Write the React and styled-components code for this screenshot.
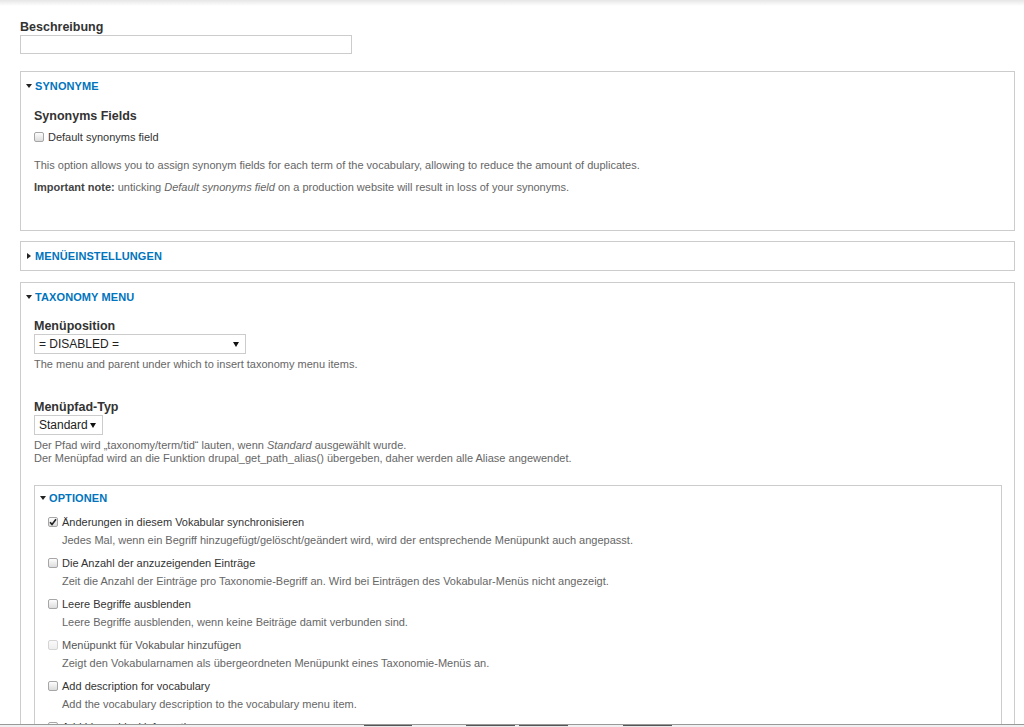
import React from 'react'
import styled, { createGlobalStyle } from 'styled-components'

const GlobalStyle = createGlobalStyle`
  html, body {
    margin: 0;
    padding: 0;
    background: #fff;
  }
  body {
    font-family: "Liberation Sans", Arial, sans-serif;
    font-size: 11px;
    color: #333;
  }
`

const TopShade = styled.div`
  height: 6px;
  background: linear-gradient(#e6e6e6, #fff);
`

const Page = styled.div`
  padding: 13px 9px 40px 20px;
`

const FieldLabel = styled.div`
  font-weight: bold;
  font-size: 12.5px;
  line-height: 16px;
  color: #333;
  margin-top: ${(p) => p.$top || 0}px;
`

const TextInput = styled.div`
  width: 330px;
  height: 17px;
  border: 1px solid #ccc;
  background: #fff;
`

const Fieldset = styled.div`
  border: 1px solid #ccc;
  background: #fff;
  margin-top: ${(p) => p.$top || 0}px;
  padding: 0 ${(p) => p.$right || 12}px ${(p) => p.$bottom || 0}px ${(p) => p.$left || 13}px;
`

const Legend = styled.div`
  display: flex;
  align-items: center;
  height: ${(p) => p.$h || 28}px;
  margin-left: -8px;
  color: #0074bd;
  font-weight: bold;
  font-size: 11px;
  text-transform: uppercase;
  letter-spacing: 0.1px;
`

const Arrow = styled.span`
  width: 0;
  height: 0;
  margin-right: 3px;
  ${(p) =>
    p.$open
      ? `border-left: 3px solid transparent; border-right: 3px solid transparent; border-top: 4px solid #222;`
      : `border-top: 3px solid transparent; border-bottom: 3px solid transparent; border-left: 4px solid #222; margin-left: 1px; margin-right: 4px;`}
`

const CheckRow = styled.div`
  display: flex;
  align-items: center;
  height: 16px;
  margin-top: ${(p) => p.$top || 0}px;
  color: ${(p) => (p.$disabled ? '#555' : '#333')};
`

const Box = styled.span`
  box-sizing: border-box;
  width: 10px;
  height: 10px;
  margin-right: 4px;
  border: 1px solid ${(p) => (p.$disabled ? '#d4d4d4' : '#a6a6a6')};
  border-radius: 2px;
  background: ${(p) =>
    p.$disabled ? 'linear-gradient(#fafafa, #eee)' : 'linear-gradient(#fdfdfd, #dcdcdc)'};
  display: flex;
  align-items: center;
  justify-content: center;
`

const Text = styled.p`
  margin: ${(p) => p.$top || 0}px 0 0 ${(p) => p.$indent || 0}px;
  line-height: ${(p) => p.$lh || 14}px;
  color: #666;
`

const Strong = styled.strong`
  color: #444;
`

const Select = styled.div`
  box-sizing: border-box;
  display: flex;
  align-items: center;
  justify-content: space-between;
  width: ${(p) => p.$w}px;
  height: 20px;
  border: 1px solid #ccc;
  padding: 0 6px 0 4px;
  font-family: "Liberation Sans", Arial, sans-serif;
  font-size: 12px;
  color: #222;
  background: #fff;
`

const SelectArrow = styled.span`
  width: 0;
  height: 0;
  border-left: 3px solid transparent;
  border-right: 3px solid transparent;
  border-top: 5px solid #111;
`

const Option = styled.div`
  margin-top: ${(p) => p.$top || 0}px;
`

const BottomBar = styled.div`
  position: fixed;
  left: 0;
  right: 0;
  bottom: 0;
  height: 2px;
  border-top: 1px solid #999;
  background: #f0f0f0;
`

const BarButton = styled.span`
  position: absolute;
  top: 0;
  left: ${(p) => p.$x}px;
  width: ${(p) => p.$w}px;
  height: 2px;
  border-top: 1px solid #555;
  background: #e8e8e8;
`

const Check = () => (
  <svg width="8" height="8" viewBox="0 0 8 8">
    <path d="M1 4.2 L3 6.4 L7 1.2" fill="none" stroke="#222" strokeWidth="1.6" />
  </svg>
)

const Checkbox = ({ checked, disabled, children, top }) => (
  <CheckRow $top={top} $disabled={disabled}>
    <Box $disabled={disabled}>{checked && <Check />}</Box>
    {children}
  </CheckRow>
)

const options = [
  {
    label: 'Änderungen in diesem Vokabular synchronisieren',
    desc: 'Jedes Mal, wenn ein Begriff hinzugefügt/gelöscht/geändert wird, wird der entsprechende Menüpunkt auch angepasst.',
    checked: true,
  },
  {
    label: 'Die Anzahl der anzuzeigenden Einträge',
    desc: 'Zeit die Anzahl der Einträge pro Taxonomie-Begriff an. Wird bei Einträgen des Vokabular-Menüs nicht angezeigt.',
  },
  {
    label: 'Leere Begriffe ausblenden',
    desc: 'Leere Begriffe ausblenden, wenn keine Beiträge damit verbunden sind.',
  },
  {
    label: 'Menüpunkt für Vokabular hinzufügen',
    desc: 'Zeigt den Vokabularnamen als übergeordneten Menüpunkt eines Taxonomie-Menüs an.',
    disabled: true,
  },
  {
    label: 'Add description for vocabulary',
    desc: 'Add the vocabulary description to the vocabulary menu item.',
  },
  {
    label: 'Add hierarchical information',
    desc: 'Add the hierarchical information of the term to the menu item.',
  },
]

export default function App() {
  return (
    <>
      <GlobalStyle />
      <TopShade />
      <Page>
        <FieldLabel>Beschreibung</FieldLabel>
        <TextInput />

        <Fieldset $top={17} $bottom={36}>
          <Legend>
            <Arrow $open />
            Synonyme
          </Legend>
          <FieldLabel $top={8}>Synonyms Fields</FieldLabel>
          <Checkbox top={5}>Default synonyms field</Checkbox>
          <Text $top={13}>
            This option allows you to assign synonym fields for each term of the vocabulary, allowing to reduce the amount of duplicates.
          </Text>
          <Text $top={8}>
            <Strong>Important note:</Strong> unticking <em>Default synonyms field</em> on a production website will result in loss of your synonyms.
          </Text>
        </Fieldset>

        <Fieldset $top={10}>
          <Legend>
            <Arrow />
            Menüeinstellungen
          </Legend>
        </Fieldset>

        <Fieldset $top={11} $bottom={20}>
          <Legend>
            <Arrow $open />
            Taxonomy menu
          </Legend>
          <FieldLabel $top={7}>Menüposition</FieldLabel>
          <Select $w={212}>
            = DISABLED =
            <SelectArrow />
          </Select>
          <Text $top={3}>The menu and parent under which to insert taxonomy menu items.</Text>

          <FieldLabel $top={28}>Menüpfad-Typ</FieldLabel>
          <Select $w={69}>
            Standard
            <SelectArrow />
          </Select>
          <Text $top={4} $lh={13}>
            Der Pfad wird „taxonomy/term/tid“ lauten, wenn <em>Standard</em> ausgewählt wurde.
            <br />
            Der Menüpfad wird an die Funktion drupal_get_path_alias() übergeben, daher werden alle Aliase angewendet.
          </Text>

          <Fieldset $top={20} $bottom={20}>
            <Legend $h={23}>
              <Arrow $open />
              Optionen
            </Legend>
            {options.map((o, i) => (
              <Option key={o.label} $top={i === 0 ? 5 : 8}>
                <Checkbox checked={o.checked} disabled={o.disabled}>
                  {o.label}
                </Checkbox>
                <Text $top={3} $indent={14}>
                  {o.desc}
                </Text>
              </Option>
            ))}
          </Fieldset>
        </Fieldset>
      </Page>
      <BottomBar>
        <BarButton $x={364} $w={48} />
        <BarButton $x={466} $w={49} />
        <BarButton $x={519} $w={49} />
        <BarButton $x={623} $w={49} />
      </BottomBar>
    </>
  )
}
